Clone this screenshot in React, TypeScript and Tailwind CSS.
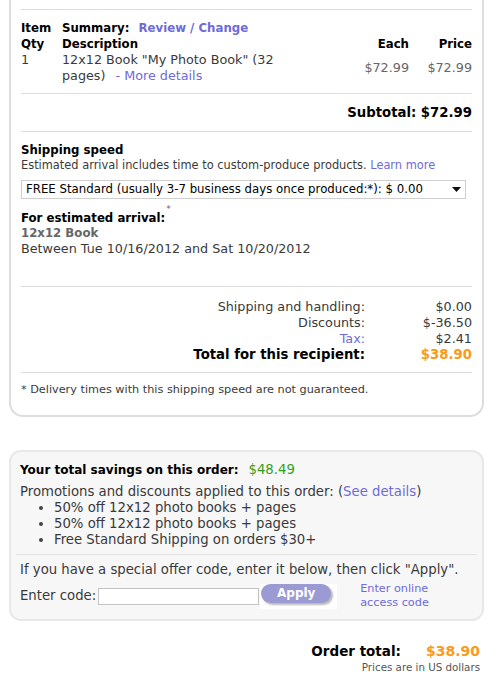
const link = "text-[#6e6bd8]";

function Rule({ className = "" }: { className?: string }) {
  return <div className={`border-t border-[#dcdcdc] ${className}`} />;
}

export default function App() {
  return (
    <div className="min-h-[684px] bg-white pl-[9px] pr-[13px] font-['DejaVu_Sans',Verdana,sans-serif] text-[12.75px] leading-[16px] text-[#3a3a3a]">
      {/* recipient card, top edge is scrolled off */}
      <section className="rounded-b-[14px] border-x-2 border-b-2 border-[#dddddd] px-[10px] pb-[17px] pt-[9px]">
        <Rule />
        <div className="grid grid-cols-[41px_232px_1fr_63px] pb-[9px] pt-[10px]">
          <div className="text-[11.75px] font-bold text-black">Item</div>
          <div className="col-span-3 text-[11.75px] font-bold text-black">
            Summary: <a className={`ml-[5px] ${link}`}>Review / Change</a>
          </div>
          <div className="text-[11.75px] font-bold text-black">Qty</div>
          <div className="text-[11.75px] font-bold text-black">Description</div>
          <div className="text-right text-[11.75px] font-bold text-black">Each</div>
          <div className="text-right text-[11.75px] font-bold text-black">Price</div>
          <div>1</div>
          <div>
            12x12 Book "My Photo Book" (32 pages) <a className={`ml-[6px] ${link}`}>- More details</a>
          </div>
          <div className="self-center text-right text-[#666]">$72.99</div>
          <div className="self-center text-right text-[#666]">$72.99</div>
        </div>
        <Rule />
        <div className="pb-[8px] pt-[9px] text-right text-[13.25px] font-bold leading-[20px] text-black">
          Subtotal: $72.99
        </div>
        <Rule />

        <div className="pb-[30px] pt-[10px]">
          <h3 className="text-[11.75px] font-bold text-black">Shipping speed</h3>
          <p className="text-[11.4px] leading-[14px]">
            Estimated arrival includes time to custom-produce products. <a className={link}>Learn more</a>
          </p>
          <div className="relative mt-[8px] w-[445px]">
            <select className="h-[19px] w-full appearance-none border border-[#cfcfcf] bg-white pl-[4px] text-[11.75px] leading-[17px] text-black outline-none">
              <option>FREE Standard (usually 3-7 business days once produced:*): $ 0.00</option>
            </select>
            <svg className="pointer-events-none absolute right-[5px] top-[7px]" width="9" height="5" viewBox="0 0 9 5">
              <path d="M0 0h9L4.5 5z" fill="#111" />
            </svg>
          </div>
          <div className="mt-[12px] leading-[15px]">
            <div className="text-[11.75px] font-bold text-black">
              For estimated arrival:<sup className="ml-[1px] align-[6px] text-[9px] font-normal text-[#666]">*</sup>
            </div>
            <div className="text-[11.75px] font-bold text-[#666]">12x12 Book</div>
            <div>Between Tue 10/16/2012 and Sat 10/20/2012</div>
          </div>
        </div>

        <Rule />
        <div className="grid grid-cols-[1fr_107px] pb-[9px] pt-[12px] text-right">
          <div>Shipping and handling:</div>
          <div>$0.00</div>
          <div>Discounts:</div>
          <div>$-36.50</div>
          <div className={link}>Tax:</div>
          <div>$2.41</div>
          <div className="text-[13.25px] font-bold text-black">Total for this recipient:</div>
          <div className="text-[13.25px] font-bold text-[#fb9a1a]">$38.90</div>
        </div>
        <Rule />
        <p className="pt-[9px] text-[11.25px]">* Delivery times with this shipping speed are not guaranteed.</p>
      </section>

      {/* savings / promo code card */}
      <section className="mt-[33px] rounded-[12px] border-2 border-[#e8e8e8] bg-[#f7f7f7] px-[5px] pb-[9px] pt-[10px] text-[13.25px]">
        <div className="px-[4px]">
          <div>
            <span className="text-[12px] font-bold text-black">Your total savings on this order:</span>
            <span className="ml-[10px] text-[#35a020]">$48.49</span>
          </div>
          <p className="mt-[6px]">
            Promotions and discounts applied to this order: (<a className={link}>See details</a>)
          </p>
          <ul className="ml-[21px] list-disc pl-[13px] marker:text-[#444]">
            <li>50% off 12x12 photo books + pages</li>
            <li>50% off 12x12 photo books + pages</li>
            <li>Free Standard Shipping on orders $30+</li>
          </ul>
        </div>
        <Rule className="mt-[6px] border-[#e2e2e2]" />
        <div className="px-[4px] pt-[7px]">
          <p>If you have a special offer code, enter it below, then click "Apply".</p>
          <div className="mt-[4px] flex items-center">
            <label className="mr-[2px]">Enter code:</label>
            <input className="h-[17px] w-[161px] border border-[#c4c4c4] bg-white outline-none" />
            <div className="ml-[1px] flex h-[25px] w-[77px] items-start bg-white pl-[1px]">
              <button className="h-[19px] w-[70px] rounded-full bg-[#9c9ad2] text-[12px] font-bold leading-[19px] text-white shadow-[2px_2px_2px_rgba(0,0,0,0.28)]">
                Apply
              </button>
            </div>
            <a className={`ml-[23px] text-[11.25px] leading-[14px] ${link}`}>
              Enter online
              <br />
              access code
            </a>
          </div>
        </div>
      </section>

      <div className="mt-[22px] flex flex-col items-end pr-[4px] text-black">
        <div className="flex text-[13.5px] font-bold leading-[17px]">
          <span>Order total:</span>
          <span className="ml-[25px] text-[14px] text-[#fb9a1a]">$38.90</span>
        </div>
        <div className="text-[10.3px] leading-[14px] text-[#555]">Prices are in US dollars</div>
      </div>
    </div>
  );
}
